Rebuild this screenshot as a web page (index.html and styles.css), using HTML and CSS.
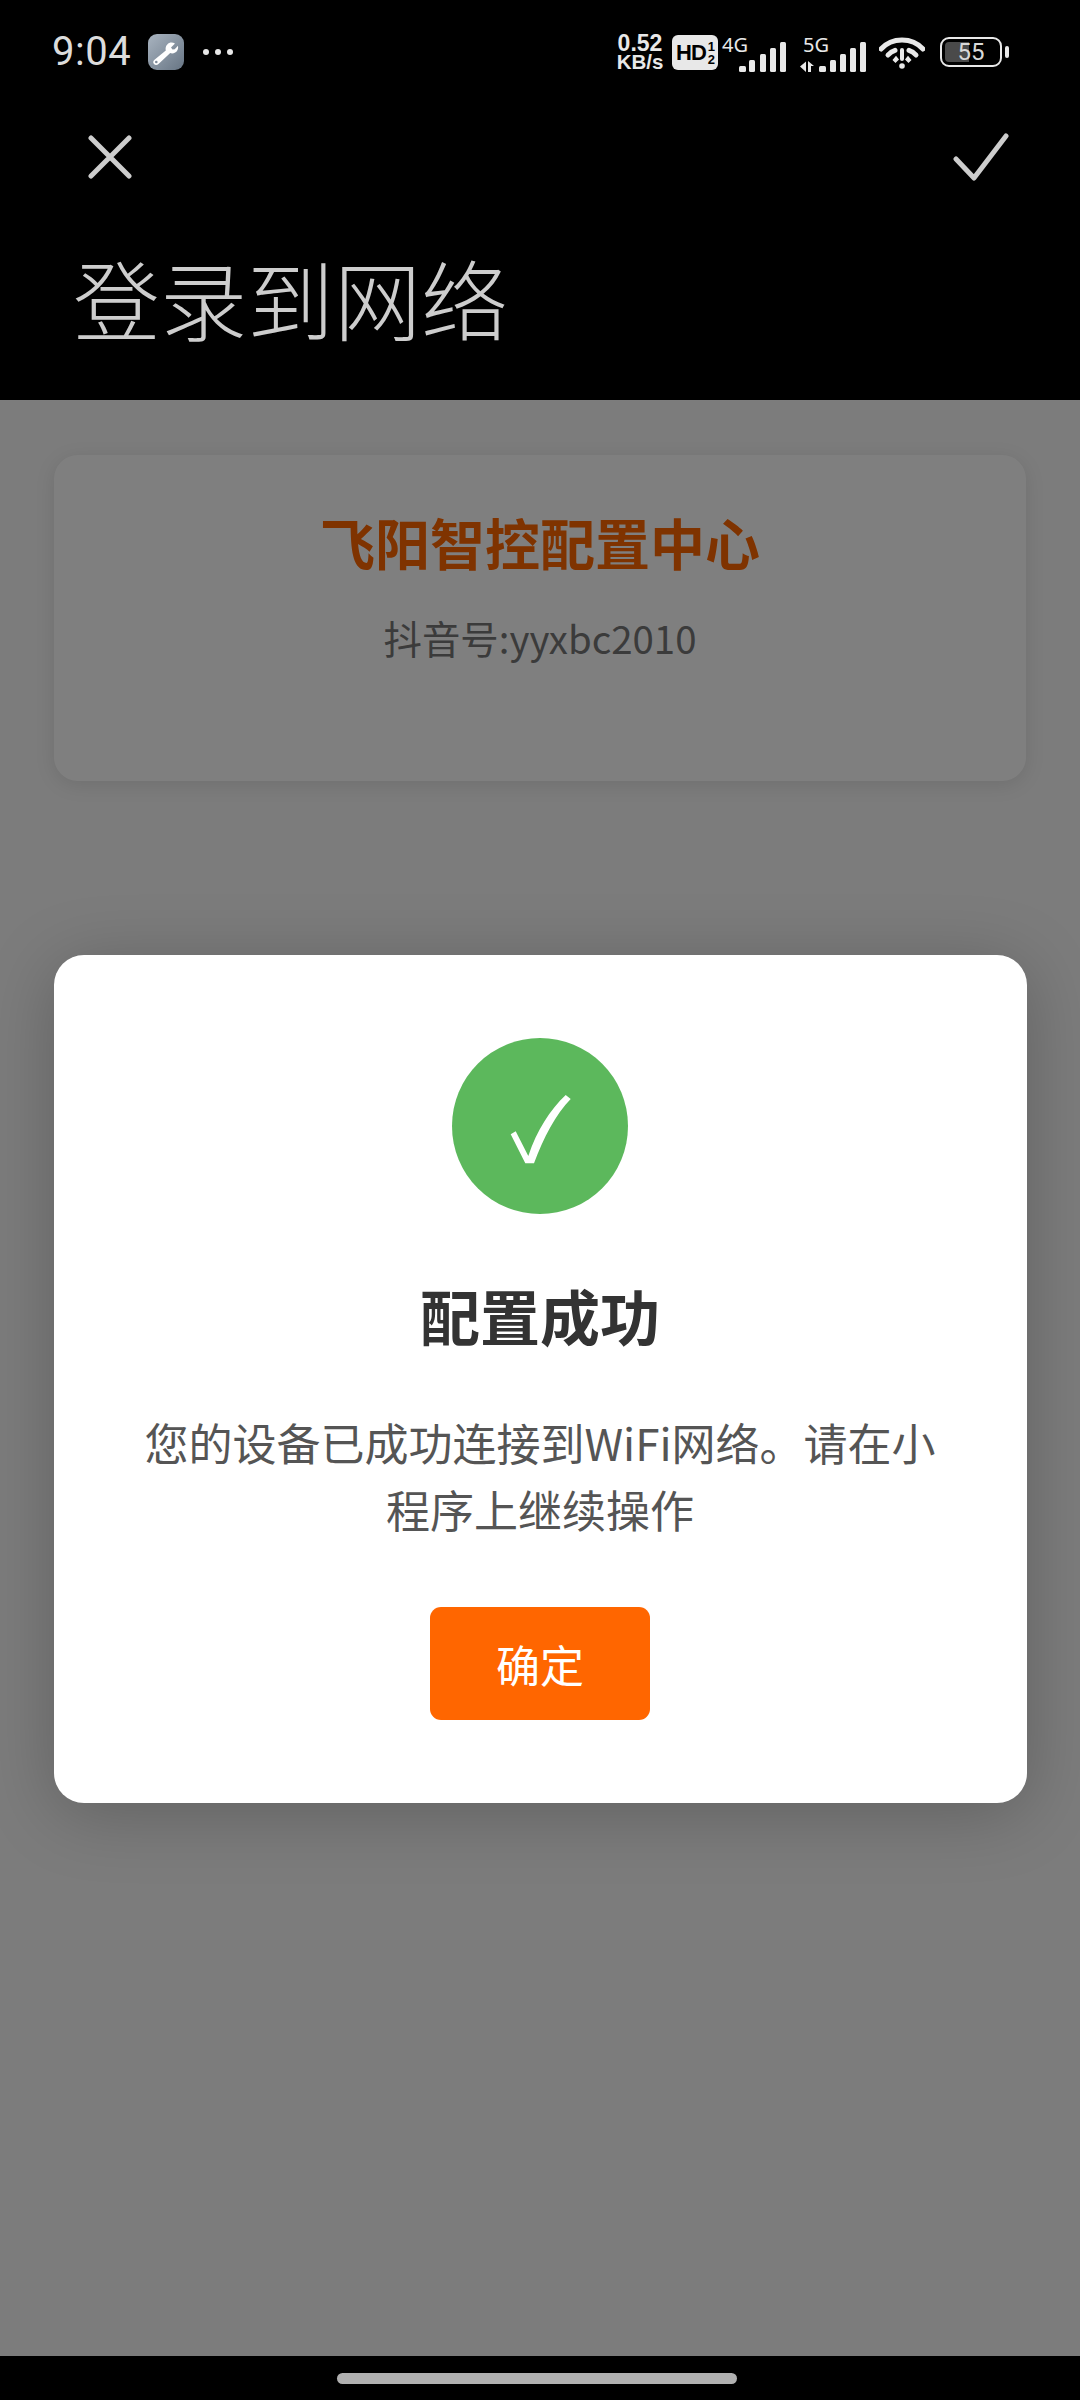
FILE: index.html
```html
<!DOCTYPE html>
<html lang="zh-CN">
<head>
  <meta charset="UTF-8">
  <meta name="viewport" content="width=device-width, initial-scale=1.0">
  <title>登录到网络</title>
  <link rel="stylesheet" href="styles.css">
</head>
<body>

<div class="page">
  <!-- Barre d'état -->
  <header class="top">
    <div class="status">
      <span class="time">9:04</span>
      <span class="app-icon">
        <svg width="36" height="36" viewBox="0 0 36 36">
          <path d="M27 9.500l-4 4 1.500 2 2.200-.2 3.300-3.600c.5 3-.5 5.600-2.800 6.900-1.800 1-3.600 1-5 .5L10.500 30c-1.300 1.300-3.500 1.300-4.500.1-1.100-1.200-1-3 .2-4.100l11.600-9.600c-.5-2-.2-4.300 1.500-6 1.900-2 4.900-2.400 7.700-.9z" fill="#fff"/>
          <circle cx="8.300" cy="28" r="1.300" fill="#7f8c9b"/>
        </svg>
      </span>
      <span class="dots"><i></i><i></i><i></i></span>
      <span class="spacer"></span>
      <span class="speed"><b class="speed-num">0.52</b><b class="speed-unit">KB/s</b></span>
      <span class="hd"><b class="hd-main">HD</b><b class="hd-sub">1<br>2</b></span>
      <span class="net net-4g">
        <span class="net-label">4G</span>
        <svg width="48" height="30" viewBox="0 0 48 30">
          <rect x="0" y="24" width="7" height="6" rx="1.500"/>
          <rect x="10" y="18" width="6" height="12" rx="1.500"/>
          <rect x="21" y="12" width="6" height="18" rx="1.500"/>
          <rect x="31" y="6" width="6" height="24" rx="1.500"/>
          <rect x="41" y="0" width="6" height="30" rx="1.500"/>
        </svg>
      </span>
      <span class="net net-5g">
        <span class="net-label">5G</span>
        <svg width="66" height="30" viewBox="0 0 66 30">
          <path d="M0 24.500l6-5v10.500zM8 19l6 5h-3v6H8z"/>
          <rect x="19" y="24" width="7" height="6" rx="1.500"/>
          <rect x="30" y="18" width="6" height="12" rx="1.500"/>
          <rect x="40" y="12" width="6" height="18" rx="1.500"/>
          <rect x="50" y="6" width="6" height="24" rx="1.500"/>
          <rect x="60" y="0" width="6" height="30" rx="1.500"/>
        </svg>
      </span>
      <span class="wifi">
        <svg width="46" height="33" viewBox="0 0 46 33">
          <path d="M2 13C13 1 33 1 44 13" fill="none" stroke="#e8e8e8" stroke-width="5" stroke-linecap="round"/>
          <path d="M9 19c2-2.500 4-3.800 7-4.700M37 19c-2-2.500-4-3.800-7-4.700" fill="none" stroke="#e8e8e8" stroke-width="5" stroke-linecap="round"/>
          <path d="M14.500 24l2.500-3 2 2.500-2.500 2.500zM31.500 24l-2.500-3-2 2.500 2.500 2.500z" fill="#e8e8e8" stroke="#e8e8e8" stroke-width="1.500"/>
          <rect x="21" y="12" width="4" height="13" rx="2" fill="#e8e8e8"/>
          <circle cx="23" cy="30" r="2.800" fill="#e8e8e8"/>
        </svg>
      </span>
      <span class="battery">
        <span class="battery-box"><span class="battery-fill"></span><span class="battery-num">55</span></span>
        <span class="battery-nib"></span>
      </span>
    </div>

    <div class="toolbar">
      <svg width="44" height="44" viewBox="0 0 44 44">
        <path d="M3 3l38 38M41 3L3 41" fill="none" stroke="#cdcdcd" stroke-width="5" stroke-linecap="round"/>
      </svg>
      <svg width="56" height="48" viewBox="0 0 56 48">
        <path d="M3 26l18 19L53 3" fill="none" stroke="#cdcdcd" stroke-width="5" stroke-linecap="round" stroke-linejoin="round"/>
      </svg>
    </div>

    <h1 class="top-title">登录到网络</h1>
  </header>

  <main class="content">
    <section class="card">
      <h2 class="card-title">飞阳智控配置中心</h2>
      <p class="card-sub">抖音号:yyxbc2010</p>
    </section>

    <!-- Fenêtre modale -->
    <div class="overlay">
      <div class="modal">
        <div class="success-circle">
          <svg width="176" height="176" viewBox="0 0 176 176">
            <path d="M58.700 96.300L63.700 93.300 76.300 118C85 92 98 72 113.700 57L118.700 61C104 76 91.300 100 82 125.300H73.300z" fill="#fff"/>
          </svg>
        </div>
        <h3 class="modal-title">配置成功</h3>
        <p class="modal-text">您的设备已成功连接到WiFi网络。请在小程序上继续操作</p>
        <button class="modal-btn">确定</button>
      </div>
    </div>
  </main>

  <footer class="navbar"><span class="nav-pill"></span></footer>
</div>

</body>
</html>
```

FILE: styles.css
```css
* {
  box-sizing: border-box;
}

body {
  margin: 0;
  font-family: "Noto Sans CJK SC", "Noto Sans", sans-serif;
  background-color: #000;
}

.page {
  width: 1080px;
  height: 2400px;
  display: flex;
  flex-direction: column;
  overflow: hidden;
}

/* Haut de page */
.top {
  height: 400px;
  background-color: #000;
  color: #cdcdcd;
  flex-shrink: 0;
}

.status {
  height: 109px;
  padding: 34px 71px 0 52px;
  display: flex;
  align-items: flex-start;
  color: #e8e8e8;
}

.time {
  font-family: Roboto, sans-serif;
  font-size: 40px;
  font-weight: 400;
  line-height: 36px;
  letter-spacing: 0.5px;
  width: 96px;
  color: #dcdcdc;
}

.app-icon {
  width: 36px;
  height: 36px;
  border-radius: 9px;
  background: linear-gradient(135deg, #a9b4c0, #677584);
  display: block;
}

.app-icon svg {
  display: block;
}

.dots {
  display: flex;
  gap: 6px;
  margin: 15px 0 0 19px;
}

.dots i {
  width: 6px;
  height: 6px;
  border-radius: 50%;
  background-color: #e8e8e8;
}

.spacer {
  flex: 1;
}

.speed {
  display: flex;
  flex-direction: column;
  align-items: center;
  font-family: "Liberation Sans", sans-serif;
  width: 48px;
  margin-right: 1px;
}

.speed b {
  display: block;
  white-space: nowrap;
}

.speed-num {
  font-size: 23px;
  line-height: 19px;
}

.speed-unit {
  font-size: 20.5px;
  line-height: 17px;
}

.hd {
  width: 46px;
  height: 35px;
  margin: 1px 0 0 7px;
  border-radius: 6px;
  background-color: #e8e8e8;
  color: #000;
  font-family: "Liberation Sans", sans-serif;
  display: flex;
  align-items: center;
  padding-left: 4px;
}

.hd-main {
  font-size: 22px;
  letter-spacing: -1px;
}

.hd-sub {
  font-size: 13px;
  line-height: 13px;
  margin-left: 2px;
  text-align: center;
}

.net {
  position: relative;
  height: 34px;
  display: flex;
  align-items: flex-end;
  margin-top: 4px;
}

.net svg {
  fill: #e8e8e8;
  display: block;
}

.net-4g {
  margin-left: 21px;
}

.net-5g {
  margin-left: 13px;
}

.net-label {
  position: absolute;
  top: -3px;
  left: -17px;
  font-family: "Noto Sans", sans-serif;
  font-size: 20px;
  line-height: 20px;
}

.net-5g .net-label {
  left: 3px;
}

.wifi {
  margin: 2px 0 0 13px;
}

.wifi svg {
  display: block;
}

.battery {
  display: flex;
  align-items: center;
  margin: 3px 0 0 15px;
}

.battery-box {
  position: relative;
  width: 62px;
  height: 30px;
  border: 2.5px solid #e8e8e8;
  border-radius: 9px;
  display: flex;
  align-items: center;
  justify-content: center;
}

.battery-fill {
  position: absolute;
  left: 3px;
  top: 3px;
  bottom: 3px;
  width: 24px;
  border-radius: 4px 0 0 4px;
  background-color: #4a4a4a;
}

.battery-num {
  position: relative;
  font-family: Roboto, sans-serif;
  font-size: 24px;
  line-height: 25px;
  color: #d8d8d8;
}

.battery-nib {
  width: 4px;
  height: 12px;
  margin-left: 3px;
  border-radius: 2px;
  background-color: #e8e8e8;
}

.toolbar {
  height: 96px;
  padding: 0 71px 0 88px;
  display: flex;
  align-items: center;
  justify-content: space-between;
}

.toolbar svg {
  display: block;
}

.top-title {
  margin: 32px 0 0 73px;
  font-size: 87px;
  font-weight: 200;
  line-height: 120px;
  white-space: nowrap;
}

/* Contenu */
.content {
  position: relative;
  flex: 1;
  background-color: #f8f8f8;
  padding: 55px 54px 0;
}

.card {
  background-color: #fff;
  border-radius: 24px;
  height: 326px;
  padding-top: 50px;
  text-align: center;
  box-shadow: 0 4px 20px rgba(0, 0, 0, 0.1);
}

.card-title {
  margin: 0;
  font-size: 55px;
  font-weight: 700;
  line-height: 72px;
  color: #ff6600;
}

.card-sub {
  margin: 30px 0 0;
  font-size: 38.4px;
  line-height: 60px;
  color: #777;
}

/* Modale */
.overlay {
  position: absolute;
  left: 0;
  top: 0;
  width: 100%;
  height: 100%;
  padding: 2px 0 0 1px;
  background-color: rgba(0, 0, 0, 0.5);
  display: flex;
  align-items: center;
  justify-content: center;
}

.modal {
  width: 973px;
  height: 848px;
  padding: 83px 82px 0 81px;
  background-color: #fff;
  border-radius: 30px;
  text-align: center;
  box-shadow: 0 10px 70px rgba(0, 0, 0, 0.22);
}

.success-circle {
  width: 176px;
  height: 176px;
  margin: 0 auto;
  border-radius: 50%;
  background-color: #5cb85c;
}

.success-circle svg {
  display: block;
}

.modal-title {
  margin: 61px 0 0;
  font-size: 60px;
  font-weight: 700;
  line-height: 80px;
  color: #333;
}

.modal-text {
  margin: 54px 0 0;
  font-size: 44px;
  line-height: 67px;
  color: #555;
}

.modal-btn {
  display: block;
  width: 220px;
  height: 113px;
  margin: 64px auto 0;
  border: none;
  border-radius: 11px;
  background-color: #ff6600;
  color: #fff;
  font-family: inherit;
  font-size: 44px;
}

/* Barre de navigation */
.navbar {
  height: 44px;
  background-color: #000;
  display: flex;
  justify-content: center;
  padding: 17px 6px 0 0;
  flex-shrink: 0;
}

.nav-pill {
  width: 400px;
  height: 11px;
  border-radius: 6px;
  background-color: #b0b0b0;
}
```
